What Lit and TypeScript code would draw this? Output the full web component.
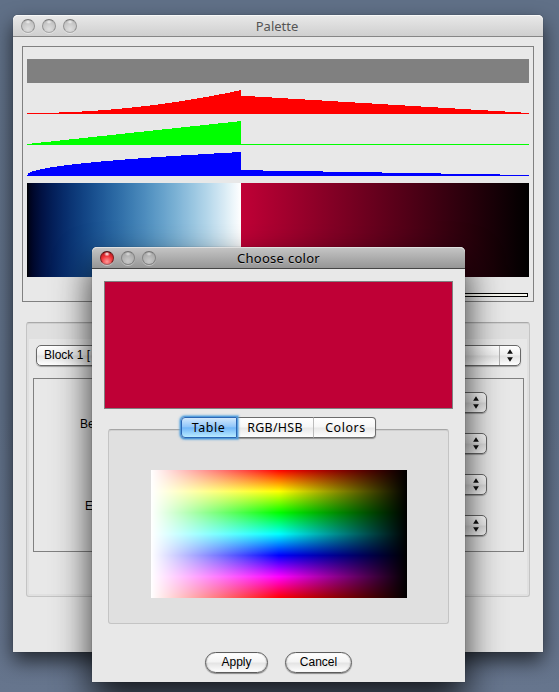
import { LitElement, html, svg, css } from "lit";
import { customElement } from "lit/decorators.js";

const SPLIT = 214;
const WIDTH = 502;
const END = [192, 0, 54];

type Curve = (x: number) => number;

/** Channel values (0..1) for every palette column. */
const channel = (rise: Curve, start: number): Curve => (x) =>
  x < SPLIT
    ? rise(x / SPLIT)
    : (start / 255) * (1 - (x - SPLIT) / (WIDTH - SPLIT));

const red = channel((t) => t * t, END[0]);
const green = channel((t) => t, END[1]);
const blue = channel((t) => Math.sqrt(t), END[2]);

const chartPath = (f: Curve) => {
  let d = "M0 24";
  for (let x = 0; x < WIDTH; x++) {
    d += `V${23 - Math.round(f(x) * 23)}H${x + 1}`;
  }
  return d + "V24Z";
};

const paletteGradient = () => {
  const stops: string[] = [];
  const at = (x: number) =>
    `rgb(${[red, green, blue].map((f) => Math.round(f(x) * 255)).join(",")})`;
  for (let x = 0; x <= SPLIT - 1; x += 3) stops.push(`${at(x)} ${x}px`);
  stops.push(`${at(SPLIT - 0.01)} ${SPLIT}px`);
  stops.push(`${at(SPLIT)} ${SPLIT}px`, `#000 ${WIDTH}px`);
  return `background:linear-gradient(90deg,${stops.join(",")})`;
};

const arrows = svg`<path d="M3 0.2L5.9 4.8H0.1ZM3 12.8L5.9 8.2H0.1Z" fill="#111"/>`;

@customElement("window-lights")
export class WindowLights extends LitElement {
  static properties = { active: { type: Boolean, reflect: true } };
  static styles = css`
    :host { display: flex; gap: 7px; }
    .light {
      width: 14px; height: 14px; border-radius: 50%; box-sizing: border-box;
      border: 1px solid #929292; border-top-color: #777; border-bottom-color: #a8a8a8;
      background:
        radial-gradient(ellipse 3px 2px at 50% 2px, rgba(255,255,255,.75), transparent),
        radial-gradient(circle at 50% 75%, #dedede, #c0c0c0 75%);
      box-shadow: 0 1px 0 rgba(255,255,255,.4);
    }
    :host([active]) .light {
      border-color: #858585; border-top-color: #737373;
      background:
        radial-gradient(ellipse 3px 2px at 50% 2px, rgba(255,255,255,.6), transparent),
        radial-gradient(circle at 50% 75%, #c8c8c8, #a9a9a9 75%);
    }
    :host([active]) .light:first-child {
      border-color: #7c2023; border-top-color: #4a1012; border-bottom-color: #a46466;
      background:
        radial-gradient(ellipse 3px 2.5px at 50% 2px, #fff, transparent),
        radial-gradient(circle at 50% 80%, #ff9a9a, #ee3438 50%, #a80f14 95%);
    }
  `;
  render() {
    return html`<i class="light"></i><i class="light"></i><i class="light"></i>`;
  }
}

@customElement("app-root")
export class AppRoot extends LitElement {
  static styles = css`
    :host {
      display: block; position: relative; width: 559px; height: 692px; overflow: hidden;
      background: linear-gradient(#607087, #5f6f87 60%, #66758d);
      font: 12px "Liberation Sans", Arial, sans-serif; color: #000;
    }
    * { box-sizing: border-box; }
    svg { display: block; }
    .window { position: absolute; background: #e8e8e8; border-radius: 5px 5px 0 0; display: flex; flex-direction: column; }
    .palette { left: 13px; top: 15px; width: 530px; height: 637px; box-shadow: 0 0 1px rgba(0,0,0,.5), 0 9px 20px rgba(0,0,0,.65); }
    .dialog { left: 92px; top: 247px; width: 373px; height: 435px; box-shadow: 0 0 1px rgba(0,0,0,.6), 0 18px 36px 1px rgba(0,0,0,.78); }
    .titlebar {
      flex: none; height: 22px; border-radius: 5px 5px 0 0; padding-left: 8px;
      display: grid; grid-template-columns: 56px 1fr 64px; align-items: center;
      border-bottom: 1px solid #868686; box-shadow: inset 0 1px 0 #f8f8f8;
      background: linear-gradient(#e9e9e9, #cfcfcf);
    }
    .dialog .titlebar { border-bottom-color: #454545; box-shadow: inset 0 1px 0 #e0e0e0; background: linear-gradient(#c6c6c6, #969696); }
    .title { font: 13px/20px "Noto Sans", sans-serif; text-align: center; white-space: nowrap; color: #555; padding: 1px 2px 0 0; }
    .dialog .title { color: #000; letter-spacing: .28px; padding-right: 0; text-shadow: 0 1px 0 rgba(255,255,255,.3); }

    .preview { margin: 9px 9px 0; height: 256px; border: 1px solid #808080; padding: 12px 4px 0; display: flex; flex-direction: column; gap: 7px; }
    .range { height: 24px; background: #808080; }
    .strip { height: 94px; }
    .scroll { width: 287px; height: 4px; margin: 9px 1px 0 auto; align-self: flex-end; border: 1px solid #000; background: #f8f8f0; }
    .tabpane {
      margin: 20px 13px 0; height: 275px; border: 1px solid #c4c4c4; border-top: 1px solid #a9a9a9;
      border-radius: 3px; background: #e0e0e0; padding: 16px 2px 2px; box-shadow: inset 0 1px 0 #d0d0d0;
    }
    .tabbody { height: 100%; background: #e8e8e8; padding: 6px 4px 0; }
    .popup {
      height: 21px; border: 1px solid #686868; border-bottom-width: 1px; border-radius: 5px;
      background: linear-gradient(#fff, #efefef 48%, #e2e2e2 52%, #fff);
      box-shadow: 0 1px 1px rgba(0,0,0,.3); display: flex; align-items: center; justify-content: space-between;
    }
    .wide { width: 485px; margin-left: 3px; padding-left: 7px; }
    .wide .name { padding-bottom: 2px; }
    .arrowcell { width: 21px; height: 19px; display: flex; align-items: center; justify-content: center; }
    .wide .arrowcell { border-left: 1px solid #b0b0b0; }
    .params { margin-top: 12px; width: 491px; height: 174px; border: 1px solid #808080; display: flex; justify-content: space-between; padding: 13px 36px 0 0; }
    .labels { padding: 24px 0 0 46px; display: flex; flex-direction: column; gap: 66px; line-height: 16px; }
    .second { padding-left: 5px; }
    .spinners { display: flex; flex-direction: column; gap: 20px; }
    .small { width: 120px; justify-content: flex-end; background: linear-gradient(#fff, #efefef 46%, #e0e0e0 54%, #fafafa); }

    .swatch { margin: 12px 12px 0; height: 128px; flex: none; border: 1px solid #808080; background: #bf0036; }
    .tabs { position: relative; margin: 8px auto 0 89px; width: 195px; height: 21px; flex: none; display: grid; grid-template-columns: 56px 77px 62px; z-index: 1;
      font: 12.4px/19px "Noto Sans", sans-serif; letter-spacing: .3px; text-align: center; border-radius: 4px; box-shadow: 0 1px 1px rgba(0,0,0,.35); }
    .tab { border: 1px solid #6c6c6c; border-left: 0; background: linear-gradient(#fff, #f6f6f6 48%, #e8e8e8 52%, #fff); white-space: nowrap; }
    .tab.mid { border-right-color: #bcbcbc; }
    .tab.last { border-radius: 0 4px 4px 0; letter-spacing: .6px; padding-left: 2px; }
    .tab.on { border: 1px solid #2c66b4; border-radius: 4px 0 0 4px; letter-spacing: .6px; padding-right: 1px;
      background: linear-gradient(#d2e8fc, #92c7fa 45%, #72b7f9 52%, #b8ebff); box-shadow: 0 0 1px 1px rgba(72,150,218,.85), 0 0 2px 2px rgba(90,165,225,.7); z-index: 1; }
    .chooser { margin: -9px 16px 0; height: 195px; flex: none; border: 1px solid #c4c4c4; border-top-color: #a6a6a6; border-radius: 3px; background: #e0e0e0; padding: 40px 0 0 42px; box-shadow: inset 0 1px 0 #d0d0d0; }
    .spectrum {
      width: 256px; height: 128px;
      background:
        linear-gradient(90deg, #fff, rgba(255,255,255,0) 50%, rgba(0,0,0,0) 50%, #000),
        linear-gradient(#f00, #ff0, #0f0, #0ff, #00f, #f0f, #f00);
    }
    .buttons { margin: 28px 0 0 113px; display: flex; gap: 17px; }
    .button {
      width: 63px; height: 21px; border: 1px solid #5d5d5d; border-radius: 11px; text-align: center; line-height: 18px;
      background: linear-gradient(#fff, #f4f4f4 46%, #e4e4e4 54%, #fff);
      box-shadow: 0 1px 1px rgba(0,0,0,.4), inset 1px 0 1px rgba(0,0,0,.15), inset -1px 0 1px rgba(0,0,0,.15);
    }
    .cancel { width: 67px; }
  `;

  private chart(f: Curve, color: string) {
    return html`<svg width="502" height="24" shape-rendering="crispEdges"><path d=${chartPath(f)} fill=${color} /></svg>`;
  }

  private arrowCell() {
    return html`<span class="arrowcell"><svg width="6" height="13">${arrows}</svg></span>`;
  }

  render() {
    return html`
      <section class="window palette">
        <header class="titlebar"><window-lights></window-lights><div class="title">Palette</div></header>
        <div class="preview">
          <div class="range"></div>
          ${this.chart(red, "#f00")}${this.chart(green, "#0f0")}${this.chart(blue, "#00f")}
          <div class="strip" style=${paletteGradient()}></div>
          <div class="scroll"></div>
        </div>
        <div class="tabpane">
          <div class="tabbody">
            <div class="popup wide"><span class="name">Block 1 [</span>${this.arrowCell()}</div>
            <div class="params">
              <div class="labels"><span>Be</span><span class="second">E</span></div>
              <div class="spinners">
                ${[0, 1, 2, 3].map(() => html`<div class="popup small">${this.arrowCell()}</div>`)}
              </div>
            </div>
          </div>
        </div>
      </section>

      <section class="window dialog">
        <header class="titlebar"><window-lights active></window-lights><div class="title">Choose color</div></header>
        <div class="swatch"></div>
        <nav class="tabs">
          <div class="tab on">Table</div><div class="tab mid">RGB/HSB</div><div class="tab last">Colors</div>
        </nav>
        <div class="chooser"><div class="spectrum"></div></div>
        <div class="buttons"><div class="button">Apply</div><div class="button cancel">Cancel</div></div>
      </section>
    `;
  }
}
